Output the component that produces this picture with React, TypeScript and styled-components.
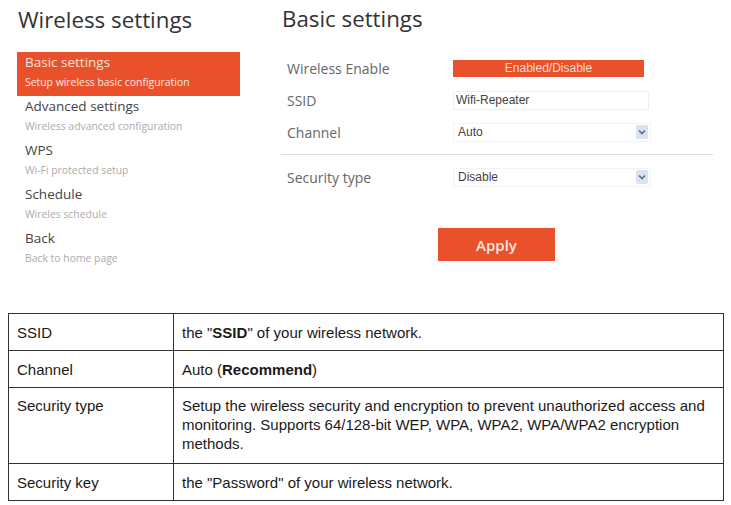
import React from "react";
import styled, { createGlobalStyle } from "styled-components";

const GlobalStyle = createGlobalStyle`
    body {
        margin: 0;
        background: #ffffff;
    }
`

const orange = "#e8512b";

const menu = [
    { title: "Basic settings", sub: "Setup wireless basic configuration", active: true },
    { title: "Advanced settings", sub: "Wireless advanced configuration" },
    { title: "WPS", sub: "Wi-Fi protected setup" },
    { title: "Schedule", sub: "Wireles schedule" },
    { title: "Back", sub: "Back to home page" },
];

export default function App() {
    return (
        <Page>
            <GlobalStyle />
            <Panel>
                <Sidebar>
                    <PageTitle>Wireless settings</PageTitle>
                    <Menu>
                        {menu.map((m) => (
                            <MenuItem key={m.title} $active={m.active}>
                                <MenuTitle>{m.title}</MenuTitle>
                                <MenuSub>{m.sub}</MenuSub>
                            </MenuItem>
                        ))}
                    </Menu>
                </Sidebar>
                <Content>
                    <SectionTitle>Basic settings</SectionTitle>
                    <Form>
                        <Row>
                            <Label>Wireless Enable</Label>
                            <Toggle>Enabled/Disable</Toggle>
                        </Row>
                        <Row>
                            <Label>SSID</Label>
                            <Field>Wifi-Repeater</Field>
                        </Row>
                        <Row>
                            <Label>Channel</Label>
                            <Select>
                                Auto
                                <Arrow />
                            </Select>
                        </Row>
                        <Divider />
                        <Row>
                            <Label>Security type</Label>
                            <Select>
                                Disable
                                <Arrow />
                            </Select>
                        </Row>
                    </Form>
                    <ApplyButton>Apply</ApplyButton>
                </Content>
            </Panel>
            <Table>
                <tbody>
                    <tr>
                        <KeyCell>SSID</KeyCell>
                        <Cell>the "<b>SSID</b>" of your wireless network.</Cell>
                    </tr>
                    <tr>
                        <KeyCell>Channel</KeyCell>
                        <Cell>Auto (<b>Recommend</b>)</Cell>
                    </tr>
                    <tr>
                        <KeyCell $tall>Security type</KeyCell>
                        <Cell $tall>
                            Setup the wireless security and encryption to prevent unauthorized access and monitoring. Supports 64/128-bit WEP, WPA, WPA2, WPA/WPA2 encryption methods.
                        </Cell>
                    </tr>
                    <tr>
                        <KeyCell>Security key</KeyCell>
                        <Cell>the "Password" of your wireless network.</Cell>
                    </tr>
                </tbody>
            </Table>
        </Page>
    )
}

const Arrow = () => (
    <ArrowBox>
        <svg width="8" height="6" viewBox="0 0 8 6">
            <path d="M1 1.5 L4 4.5 L7 1.5" fill="none" stroke="#5a6f95" strokeWidth="1.6" />
        </svg>
    </ArrowBox>
)

const Page = styled.div`
    width: 731px;
    height: 505px;
    overflow: hidden;
    font-family: "Open Sans", "Noto Sans", sans-serif;
`
const Panel = styled.div`
    display: flex;
    height: 313px;
`
const Sidebar = styled.div`
    width: 281px;
    padding-left: 17px;
    box-sizing: border-box;
`
const PageTitle = styled.h1`
    margin: 4px 0 0 1px;
    font-size: 22.3px;
    font-weight: 400;
    line-height: 32px;
    color: #333;
`
const Menu = styled.div`
    display: flex;
    flex-direction: column;
    margin-top: 16px;
    width: 223px;
`
const MenuItem = styled.div<{ $active?: boolean }>`
    height: 44px;
    padding: 0 8px;
    box-sizing: border-box;
    background: ${(p) => (p.$active ? orange : "transparent")};
    color: ${(p) => (p.$active ? "#fbe4dc" : "#444")};
    & > span:last-child {
        color: ${(p) => (p.$active ? "#fde9e1" : "#ababab")};
    }
`
const MenuTitle = styled.span`
    display: block;
    font-size: 13.5px;
    line-height: 20px;
`
const MenuSub = styled.span`
    display: block;
    font-size: 10.4px;
    line-height: 20px;
`
const Content = styled.div`
    flex: 1;
    display: flex;
    flex-direction: column;
`
const SectionTitle = styled.h2`
    margin: 4px 0 0 1px;
    font-size: 22.3px;
    font-weight: 400;
    line-height: 30px;
    color: #333;
`
const Form = styled.div`
    margin-top: 18px;
    width: 432px;
`
const Row = styled.div`
    display: flex;
    align-items: center;
    height: 32px;
    padding-left: 6px;
`
const Label = styled.span`
    width: 166px;
    font-size: 14px;
    color: #666;
`
const Toggle = styled.div`
    width: 191px;
    height: 17px;
    background: ${orange};
    color: #fbd9cd;
    font-family: "Liberation Sans", Arial, sans-serif;
    font-size: 12px;
    line-height: 17px;
    text-align: center;
`
const Field = styled.div`
    width: 192px;
    height: 17px;
    border: 1px solid #eeeeee;
    padding-left: 2px;
    color: #444;
    font-family: "Liberation Sans", Arial, sans-serif;
    font-size: 12px;
    line-height: 17px;
`
const Select = styled(Field)`
    display: flex;
    justify-content: space-between;
    align-items: center;
    padding-left: 4px;
    border-color: #f2f2f2;
`
const ArrowBox = styled.span`
    display: flex;
    align-items: center;
    justify-content: center;
    width: 12px;
    height: 14px;
    margin-right: 2px;
    background: #d9e3f1;
    border-radius: 2px;
`
const Divider = styled.div`
    height: 1px;
    margin: 6px 0;
    background: #dddddd;
`
const ApplyButton = styled.button`
    margin: 35px 0 0 157px;
    width: 117px;
    height: 33px;
    border: none;
    background: ${orange};
    color: #fce6de;
    font-family: "Open Sans", sans-serif;
    font-size: 15px;
    font-weight: 600;
`
const Table = styled.table`
    margin-left: 8px;
    width: 716px;
    border-collapse: collapse;
    font-family: "Liberation Sans", Arial, sans-serif;
    font-size: 15px;
    color: #1a1a1a;
`
const KeyCell = styled.td<{ $tall?: boolean }>`
    width: 165px;
    height: ${(p) => (p.$tall ? "76px" : "37px")};
    box-sizing: border-box;
    padding: ${(p) => (p.$tall ? "8px 8px 0" : "0 8px")};
    border: 1px solid #333;
    vertical-align: ${(p) => (p.$tall ? "top" : "middle")};
    line-height: 19px;
`
const Cell = styled.td<{ $tall?: boolean }>`
    height: ${(p) => (p.$tall ? "76px" : "37px")};
    box-sizing: border-box;
    padding: ${(p) => (p.$tall ? "8px 8px 0" : "0 8px")};
    border: 1px solid #333;
    vertical-align: ${(p) => (p.$tall ? "top" : "middle")};
    line-height: 19px;
`
